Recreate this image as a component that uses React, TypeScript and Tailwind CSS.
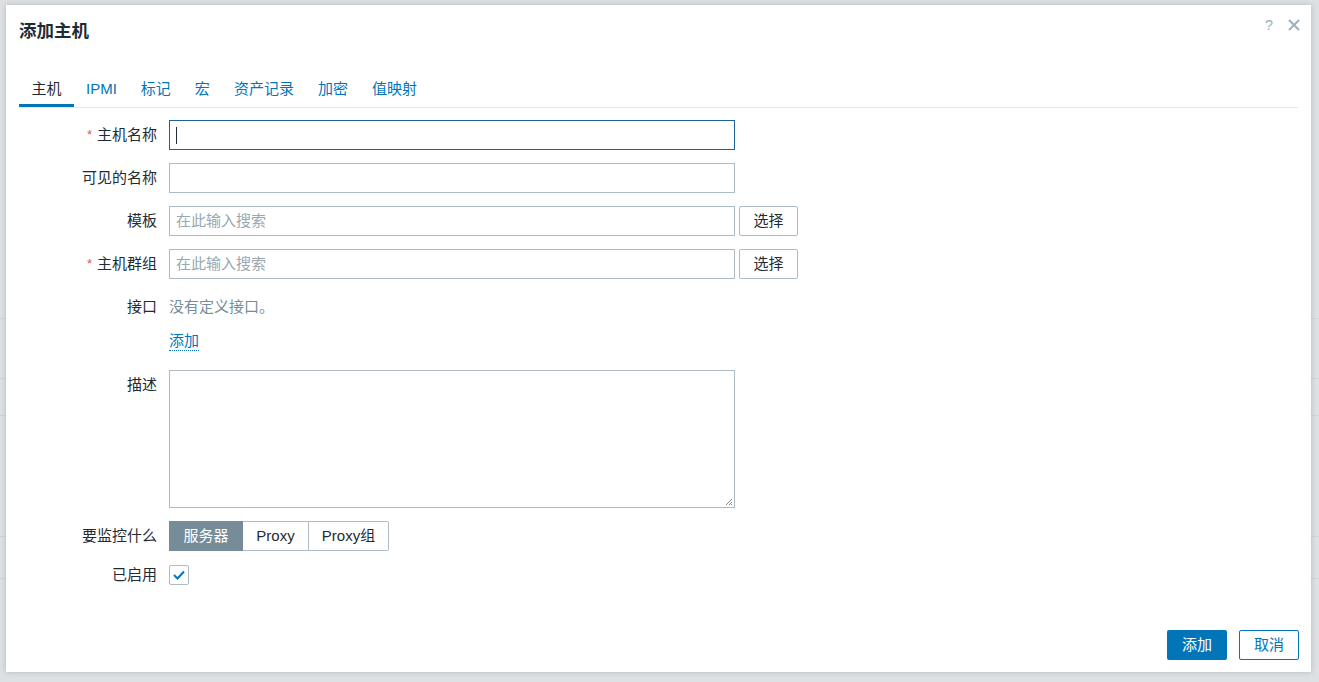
import React from "react";

const font = { fontFamily: '"Liberation Sans", Arial, "Noto Sans CJK SC", sans-serif' };

function Label({ text, required }: { text: string; required?: boolean }) {
  return (
    <div className="flex h-[30px] items-center justify-end text-[15px] text-[#1f2c33]">
      {required && <span className="mr-[5px] text-[13px] text-[#e45959]">*</span>}
      {text}
    </div>
  );
}

export default function App() {
  const tabs = ["主机", "IPMI", "标记", "宏", "资产记录", "加密", "值映射"];
  return (
    <div className="relative h-[682px] w-[1319px] overflow-hidden bg-[#dde1e4]" style={font}>
      {/* faint background page lines */}
      <div className="absolute left-0 top-[318px] h-px w-full bg-[#cfd5d9]" />
      <div className="absolute left-0 top-[378px] h-px w-full bg-[#cfd5d9]" />
      <div className="absolute left-0 top-[415px] h-px w-full bg-[#cfd5d9]" />
      <div className="absolute left-0 top-[536px] h-px w-full bg-[#cfd5d9]" />
      <div className="absolute left-0 top-[578px] h-px w-full bg-[#cfd5d9]" />
      <div className="flex pl-[6px] pt-[5px]">
        <div className="relative flex h-[667px] w-[1305px] flex-col bg-white shadow-[0_0_6px_rgba(0,0,0,0.18)]">
          <div className="absolute right-[38px] top-[9px] text-[15px] text-[#a0b0ba]">?</div>
          <svg className="absolute right-[11px] top-[14px]" width="12" height="12" viewBox="0 0 12 12">
            <path d="M1 1L11 11M11 1L1 11" stroke="#a0b0ba" strokeWidth="2" />
          </svg>
          <div className="px-[13px] pt-[15px] text-[17.5px] font-bold leading-[22px] text-[#1f2c33]">添加主机</div>
          <div className="mx-[13px] mt-[37px] flex border-b border-[#e6e9eb]">
            {tabs.map((t, i) => (
              <div
                key={t}
                className={
                  "flex h-[28px] items-start px-[12px] text-[15px] " +
                  (i === 0 ? "w-[55px] justify-center border-b-[3px] border-[#0275b8] text-[#1f2c33]" : "text-[#0275b8]")
                }
              >
                <span className="leading-[20px]">{t}</span>
              </div>
            ))}
          </div>
          <div className="mx-[13px] mt-[12px] grid grid-cols-[138px_auto] gap-x-[12px] gap-y-[13px]">
            <Label text="主机名称" required />
            <div className="flex">
              <div className="flex h-[30px] w-[566px] items-center border border-[#1b6296] px-[6px]">
                <div className="h-[17px] w-px bg-[#1f2c33]" />
              </div>
            </div>
            <Label text="可见的名称" />
            <div className="h-[30px] w-[566px] border border-[#acbbc4]" />
            <Label text="模板" />
            <div className="flex gap-[4px]">
              <div className="flex h-[30px] w-[566px] items-center border border-[#acbbc4] px-[6px] text-[15px] text-[#9aa7af]">
                在此输入搜索
              </div>
              <div className="flex h-[30px] w-[59px] items-center justify-center rounded-[2px] border border-[#acbbc4] text-[15px] text-[#1f2c33]">
                选择
              </div>
            </div>
            <Label text="主机群组" required />
            <div className="flex gap-[4px]">
              <div className="flex h-[30px] w-[566px] items-center border border-[#acbbc4] px-[6px] text-[15px] text-[#9aa7af]">
                在此输入搜索
              </div>
              <div className="flex h-[30px] w-[59px] items-center justify-center rounded-[2px] border border-[#acbbc4] text-[15px] text-[#1f2c33]">
                选择
              </div>
            </div>
            <Label text="接口" />
            <div className="flex flex-col">
              <div className="flex h-[30px] items-center text-[15px] text-[#768d99]">没有定义接口。</div>
              <div className="mt-[10px] flex h-[25px] items-start">
                <span className="border-b border-dotted border-[#0275b8] text-[15px] leading-[18px] text-[#0275b8]">添加</span>
              </div>
            </div>
            <Label text="描述" />
            <div className="relative h-[138px] w-[566px] border border-[#acbbc4]">
              <svg className="absolute bottom-[1px] right-[1px]" width="8" height="8" viewBox="0 0 8 8">
                <path d="M7 1L1 7M7 4L4 7M7 6L6 7" stroke="#8a8a8a" strokeWidth="1" />
              </svg>
            </div>
            <Label text="要监控什么" />
            <div className="flex">
              <div className="flex h-[30px] w-[74px] items-center justify-center border border-[#768d99] bg-[#768d99] text-[15px] text-white">服务器</div>
              <div className="flex h-[30px] w-[65px] items-center justify-center border-y border-[#acbbc4] text-[15px] text-[#1f2c33]">Proxy</div>
              <div className="flex h-[30px] w-[81px] items-center justify-center rounded-r-[2px] border border-[#acbbc4] text-[15px] text-[#1f2c33]">Proxy组</div>
            </div>
            <div className="-mt-[4px] flex h-[30px] items-center justify-end text-[15px] text-[#1f2c33]">已启用</div>
            <div className="-mt-[4px] flex h-[30px] items-center">
              <div className="flex h-[20px] w-[20px] items-center justify-center rounded-[2px] border border-[#acbbc4]">
                <svg width="12" height="10" viewBox="0 0 12 10">
                  <path d="M1 5L4.5 8.5L11 1.5" stroke="#0275b8" strokeWidth="2" fill="none" />
                </svg>
              </div>
            </div>
          </div>
          <div className="mt-auto flex justify-end gap-[12px] px-[12px] pb-[12px]">
            <div className="flex h-[30px] w-[60px] items-center justify-center rounded-[2px] bg-[#0275b8] text-[15px] text-white">添加</div>
            <div className="flex h-[30px] w-[60px] items-center justify-center rounded-[2px] border border-[#0275b8] text-[15px] text-[#0275b8]">取消</div>
          </div>
        </div>
      </div>
    </div>
  );
}
